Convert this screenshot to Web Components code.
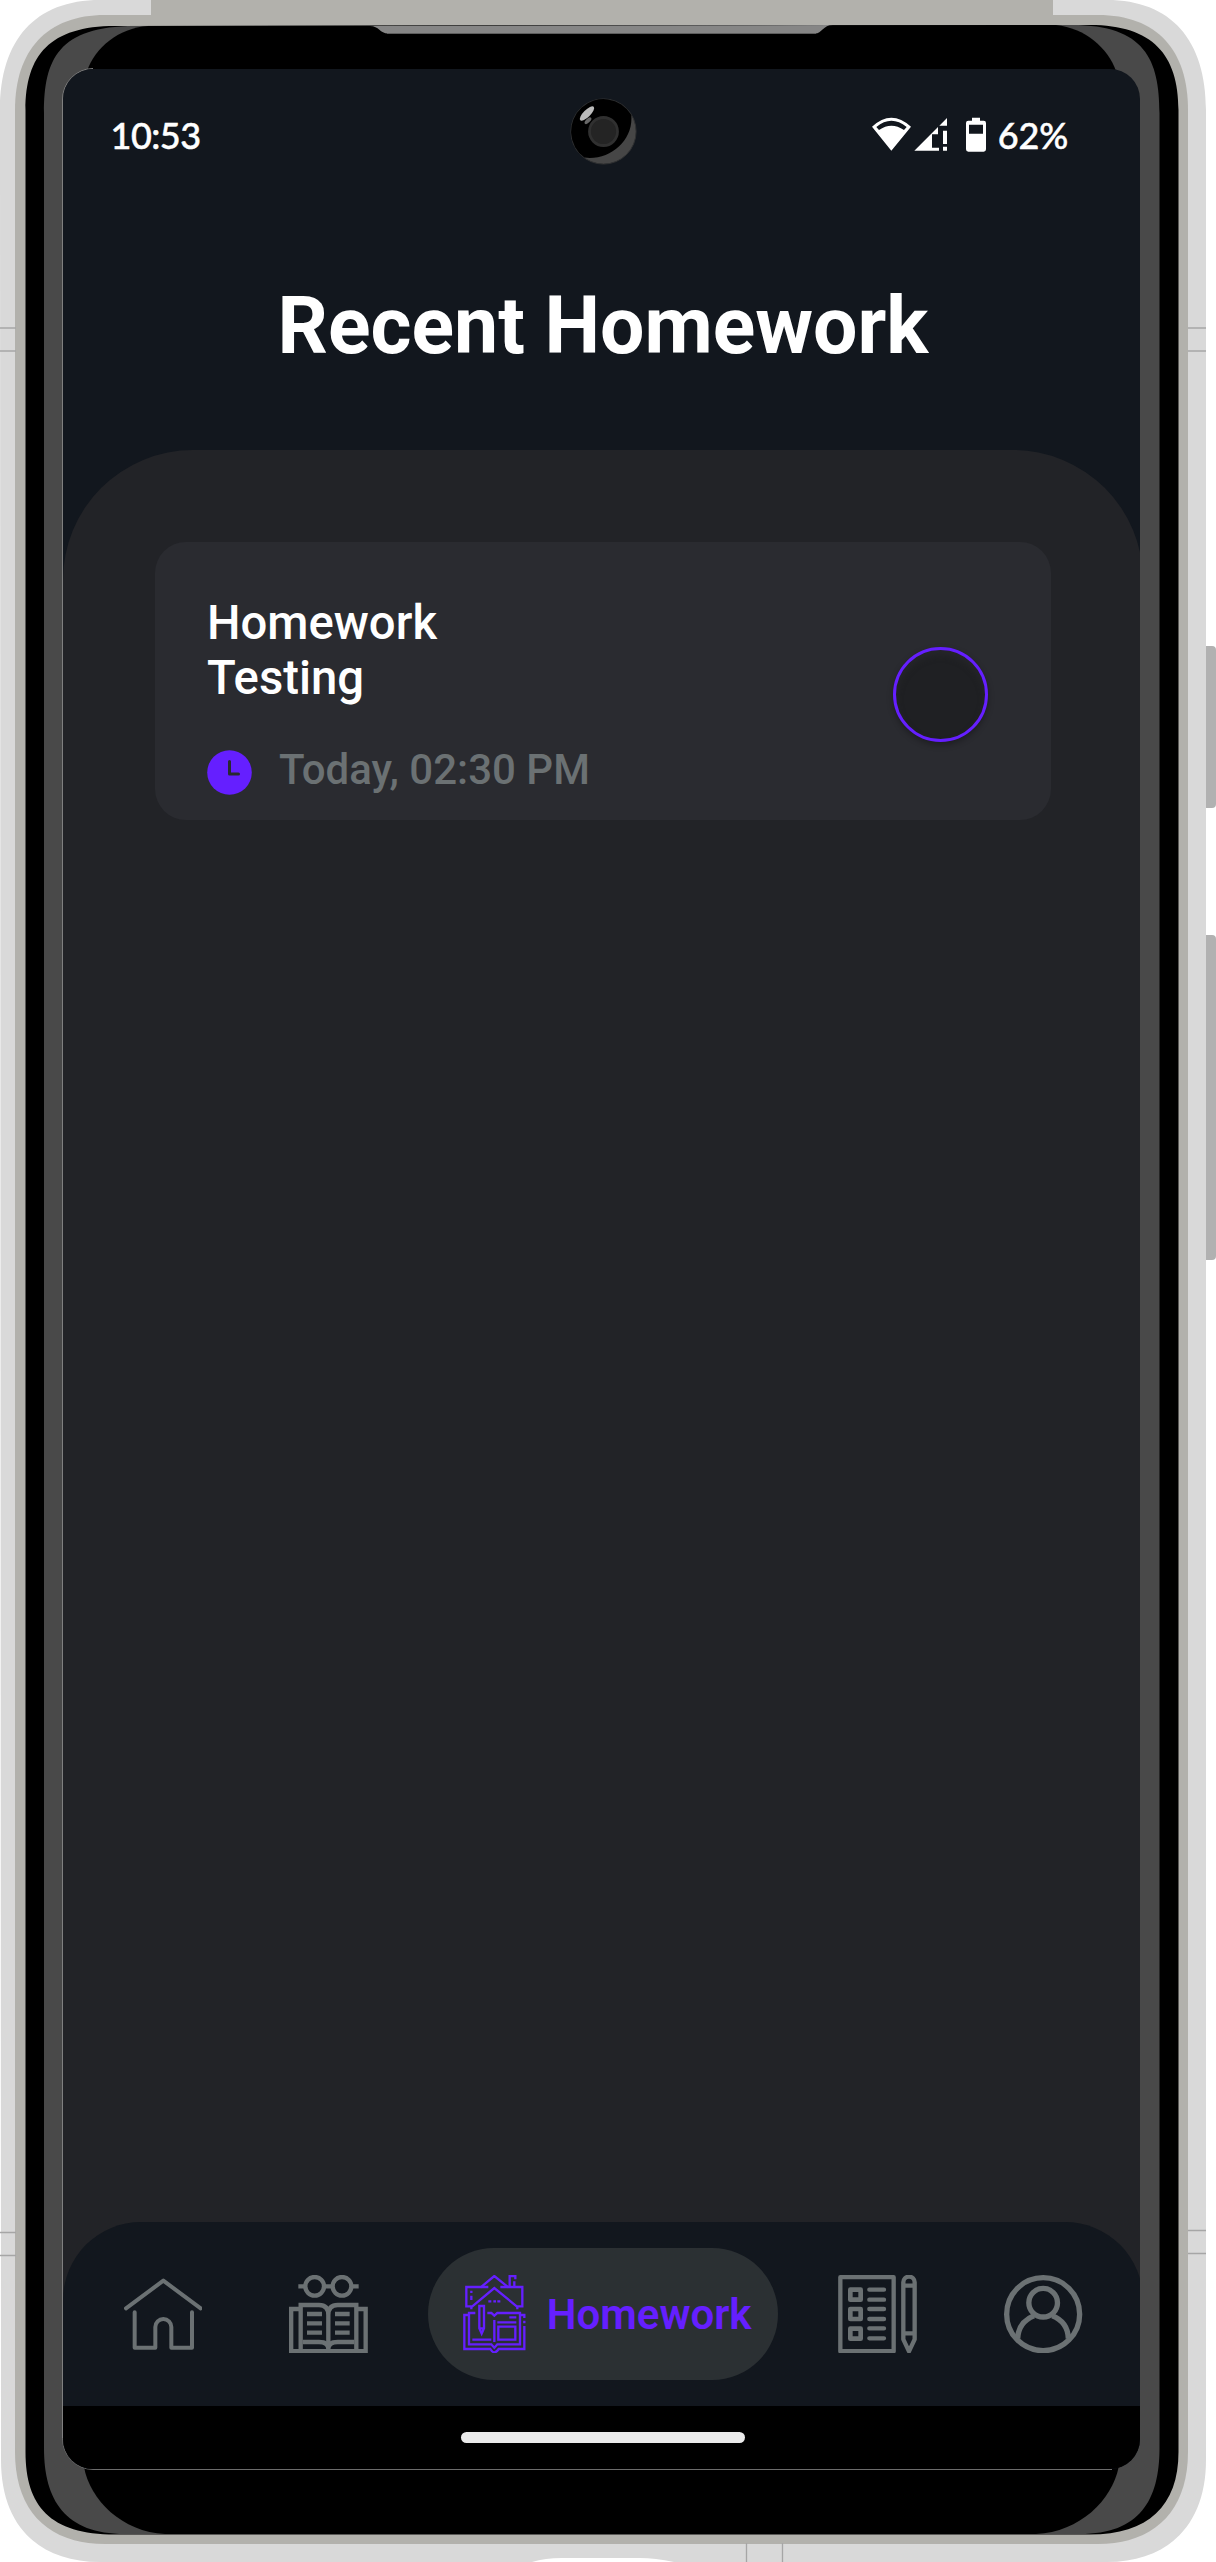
<!DOCTYPE html>
<html lang="en">
<head>
<meta charset="utf-8">
<title>Recent Homework</title>
<style>
html,body{margin:0;padding:0;background:#fff}
body{width:1216px;height:2562px;overflow:hidden;font-family:Roboto,"Liberation Sans",sans-serif}
</style>
</head>
<body>
<phone-frame>
  <status-bar time="10:53" battery="62%"></status-bar>
  <page-title>Recent Homework</page-title>
  <task-panel>
    <task-card when="Today, 02:30 PM">Homework Testing</task-card>
  </task-panel>
  <nav-bar>
    <nav-item icon="home" style="margin-right:86.7px"></nav-item>
    <nav-item icon="books" style="margin-right:60.6px"></nav-item>
    <nav-item icon="homework" active style="margin-right:60.6px">Homework</nav-item>
    <nav-item icon="notes" style="margin-right:87.3px"></nav-item>
    <nav-item icon="profile"></nav-item>
  </nav-bar>
  <gesture-bar></gesture-bar>
</phone-frame>
<script>
const make = (name, html) => customElements.define(name, class extends HTMLElement {
  constructor() {
    super();
    this.attachShadow({mode: 'open'});
  }
  connectedCallback() {
    this.shadowRoot.innerHTML = typeof html === 'function' ? html(this) : html;
  }
});

make('phone-frame', `
<style>
:host{display:block;position:relative;width:1216px;height:2562px;box-sizing:border-box;padding:69px 0 0 63px}
.shell{position:absolute;left:0;top:0}
.camera{position:absolute;left:565px;top:93px}
.screen{position:relative;width:1077px;height:2400px;border-radius:30px;overflow:hidden;background:#12171e}
.content{width:1080px;height:2400px;display:flex;flex-direction:column}
</style>
<svg class="shell" width="1216" height="2562" viewBox="0 0 1216 2562">
  <path fill="#b1b1b1" d="M1205 646h7q4 0 4 4v154q0 4-4 4h-7zM1205 935h7q4 0 4 4v317q0 4-4 4h-7z"/>
  <path fill="#d9d9d9" d="M0 110C0 40 35 0 100 0H1107C1171 0 1206 40 1206 110V2460C1206 2524 1169 2562 1107 2562H674Q655 2558 640 2558H562Q545 2558 532 2562H100C37 2562 1 2524 1 2460Z"/>
  <path fill="#b2b1ac" d="M151 0H1053V16H151Z"/>
  <path fill="#b2b1ac" d="M15 110C15 50 47 15 105 15H1098C1157 15 1188 50 1188 110V2452C1188 2510 1155 2544 1098 2544H105C47 2544 15 2510 15 2452Z"/>
  <g stroke="#a6a6a6" stroke-width="1.3"><path d="M0 328H16M0 351H16M0 2232.5H16M0 2255.5H16M1188 328H1206M1188 351H1206M1188 2230.5H1206M1188 2253.5H1206M746.5 2543V2562M782.5 2543V2562"/></g>
  <path fill="#000" d="M25.500 110C25.500 55 50 26 115 26L1090 25C1153 25 1178.500 55 1178.500 110V2452C1178.500 2506 1148 2534.500 1090 2534.500H115C50 2534.500 25.500 2506 25.500 2452Z"/>
  <path fill="#494949" d="M44 113C44 60 58 26 135 26L1072 25C1145 25 1159.500 60 1159.500 113V2448C1159.500 2500 1140 2534 1080 2534H125C65 2534 44 2500 44 2448Z"/>
  <path fill="#000" d="M87 71C95 48 118 28 148 26L1056 25C1085 28 1108 48 1116 71V100H87Z"/>
  <path fill="#000" d="M84 2467C90 2500 122 2532 165 2534H1036C1080 2532 1112 2500 1118.700 2467V2440H84Z"/>
  <path fill="#868686" d="M370 26C379 26 380 33.500 388 33.500H815C822 33.500 823 25 833 25Z"/>
  <path stroke="#5e5e5e" stroke-width="1" d="M387 33.500H816"/>
  <path fill="none" stroke="#808080" stroke-width="1" d="M93 68.500A31 31 0 0 0 62.500 100V2440"/>
  <path fill="none" stroke="#6c6c6c" stroke-width="1" d="M62.500 2438A31 31 0 0 0 93 2469.500H1112"/>
</svg>
<div class="screen"><div class="content"><slot></slot></div></div>
<svg class="camera" width="77" height="77" viewBox="565 93 77 77">
  <circle cx="603.500" cy="131.500" r="32.600" fill="#464646" stroke="#303132" stroke-width="1"/>
  <path fill="#000" d="M631.200 114.700A32.400 32.400 0 1 0 584.300 157.600C610 161 634 140 631.200 114.700Z"/>
  <circle cx="603.500" cy="131.500" r="14" fill="#242424" stroke="#303030" stroke-width="2.800"/>
  <ellipse cx="587" cy="113.500" rx="9.500" ry="3.500" transform="rotate(-45 587 113.500)" fill="#bcbcbc"/>
  <ellipse cx="588" cy="120.700" rx="4.300" ry="2" transform="rotate(-45 588 120.700)" fill="#686868"/>
</svg>`);

make('status-bar', el => `
<style>
:host{display:flex;flex:none;height:132px;align-items:center;box-sizing:border-box;padding:0 75px 0 47.500px;color:#fff;font:500 36px Lato,sans-serif;-webkit-text-stroke:.5px #fff}
.time{letter-spacing:-.5px}
.spacer{flex:1}
.level{letter-spacing:-.2px}
svg{display:block;margin-right:11px}
</style>
<span class="time">${el.getAttribute('time')}</span><span class="spacer"></span>
<svg width="115" height="36" viewBox="228 352 345 108" fill="#fff">
  <path fill-rule="evenodd" d="M228 381Q286 327 345 381L286 453ZM241 382L249 391Q286 365 324 391L332 382Q286 345 241 382Z"/>
  <path d="M453 355V378H430ZM426 382V404H408V444H429V453H355Z"/>
  <path d="M441 393H453V433H441ZM441 441H453V453H441Z"/>
  <path fill-rule="evenodd" d="M528 354H552V363H563Q570 363 570 370V449Q570 456 563 456H517Q510 456 510 449V370Q510 363 517 363H528ZM519 375V402H561V375Z"/>
</svg>
<span class="level">${el.getAttribute('battery')}</span>`);

make('page-title', `
<style>
:host{display:flex;flex:none;height:249px;box-sizing:border-box;padding-top:78px;justify-content:center;color:#fff;font:700 78.750px/94px Roboto,sans-serif;white-space:nowrap}
</style><slot></slot>`);

make('task-panel', `
<style>
:host{display:block;flex:none;height:1852px;margin-bottom:-80px;box-sizing:border-box;padding:92px 92px 0;border-radius:130px 130px 0 0;background:#222327}
</style><slot></slot>`);

make('task-card', el => `
<style>
:host{display:flex;height:278px;box-sizing:border-box;padding:0 63px 0 52px;justify-content:space-between;border-radius:31px;background:#2a2b30}
.text{display:flex;flex-direction:column;width:300px;padding-top:54px}
h2{margin:0;color:#fff;font:500 47.250px/55px Roboto,sans-serif}
.due{display:flex;align-items:center;margin-top:39px;height:50px;gap:27px;color:#6b7173;font:500 42px/50px Roboto,sans-serif;white-space:nowrap}
.due svg{flex:none;margin-top:5px}
.check{width:95px;height:95px;box-sizing:border-box;margin-top:105px;border:3px solid #651fff;border-radius:50%;background:#1f2023;box-shadow:0 3px 6px rgba(0,0,0,.3),inset 0 5px 6px rgba(41,42,47,.6)}
</style>
<div class="text">
  <h2><slot></slot></h2>
  <div class="due"><svg width="45" height="45" viewBox="0 0 45 45"><circle cx="22.500" cy="22.500" r="22.300" fill="#651fff"/><path d="M22.500 11.500V24H31.500" fill="none" stroke="#292a2f" stroke-width="3" stroke-linecap="round" stroke-linejoin="round"/></svg><span>${el.getAttribute('when')}</span></div>
</div>
<div class="check"></div>`);

make('nav-bar', `
<style>
:host{display:flex;flex:none;height:184px;box-sizing:border-box;align-items:center;padding-left:60.700px;border-radius:78px 78px 0 0;background:#12171e}
</style><slot></slot>`);

const icons = {
  home: ['371 225 236 236', `<g stroke-width="12" stroke-linecap="round" stroke-linejoin="round"><path d="M377 325L489 242L601 325"/><path d="M403 337V443H465V381A24 24 0 0 1 513 381V443H575V337"/></g>`],
  books: ['867 225 236 236', `<g stroke-width="13"><circle cx="944" cy="259" r="28"/><circle cx="1026" cy="259" r="28"/><path d="M895 259H916M972 259H998M1054 259H1076"/><path d="M902 447V315H957Q985 315 985 345Q985 315 1013 315H1069V447M985 335V440"/><path d="M902 327H873.500V453.500H1097V327H1069M908 426H957Q985 426 985 447Q985 426 1013 426H1063"/><path d="M921 342H966M921 370H966M921 398H966M1005 342H1049M1005 370H1049M1005 398H1049"/></g>`],
  homework: ['134 225 236 236', `<g stroke-width="7"><path d="M211 262L252 228L294 262M298 260V228H315V238M312 244V262"/><path d="M234 261H168V319H186L252 264L319 319H336V261H270M183 319V328M321 317V328"/><path d="M183 272V279M183 287V300M234 304H243M249 304H257M261 304H270"/><path d="M207 318H221V385L214 401L207 385ZM207 385H221"/><path d="M195 339H176V433H243L252 443L261 433H329V339H261L252 347L243 339H231"/><path d="M176 345H162V447H240Q252 467 265 447H342V378M329 345H342V354M342 362V370"/><path d="M252 360V426M186 419H243M297 352H318M261 367H318M264 380H315V419H264Z"/></g>`],
  notes: ['126 225 236 236', `<g stroke-width="13" stroke-linejoin="round" stroke-linecap="round"><path d="M133 231.500H293V453.500H133Z"/><path stroke-width="14" d="M163 269H194V299H163ZM163 327H194V357H163ZM163 386H194V416H163Z"/><path stroke-width="13" d="M220 269H264M220 299H264M220 327H264M220 357H264M220 385H264M220 415H264"/><path d="M322 247A17 17 0 0 1 356 247V418L339 454L322 418ZM322 257H356M322 400H356"/></g>`],
  profile: ['624 225 236 236', `<g stroke-width="16"><circle cx="741.500" cy="342.500" r="109.500"/><circle cx="741.500" cy="308" r="43"/><path d="M714 347Q667 366 665 416M769 347Q816 366 817 416"/></g>`]
};

make('nav-item', el => {
  const [box, shape] = icons[el.getAttribute('icon')];
  return `
<style>
:host{display:flex;flex:none;align-items:center;box-sizing:border-box;color:#6b7173}
:host([active]){width:349.400px;height:132px;padding-left:26.400px;gap:13.500px;border-radius:66px;background:#2b3033;color:#651fff;font:600 42px/50px Roboto,sans-serif}
svg{display:block;flex:none;stroke:currentColor;fill:none}
.label{margin-top:2px}
</style>
<svg width="78.670" height="78.670" viewBox="${box}">${shape}</svg>${el.hasAttribute('active') ? '<span class="label"><slot></slot></span>' : ''}`;
});

make('gesture-bar', `
<style>
:host{display:flex;flex:none;height:63px;background:#000;padding:26px 0 0 398px;box-sizing:border-box}
i{display:block;width:284px;height:11px;border-radius:5.500px;background:#ebebeb}
</style><i></i>`);
</script>
</body>
</html>
